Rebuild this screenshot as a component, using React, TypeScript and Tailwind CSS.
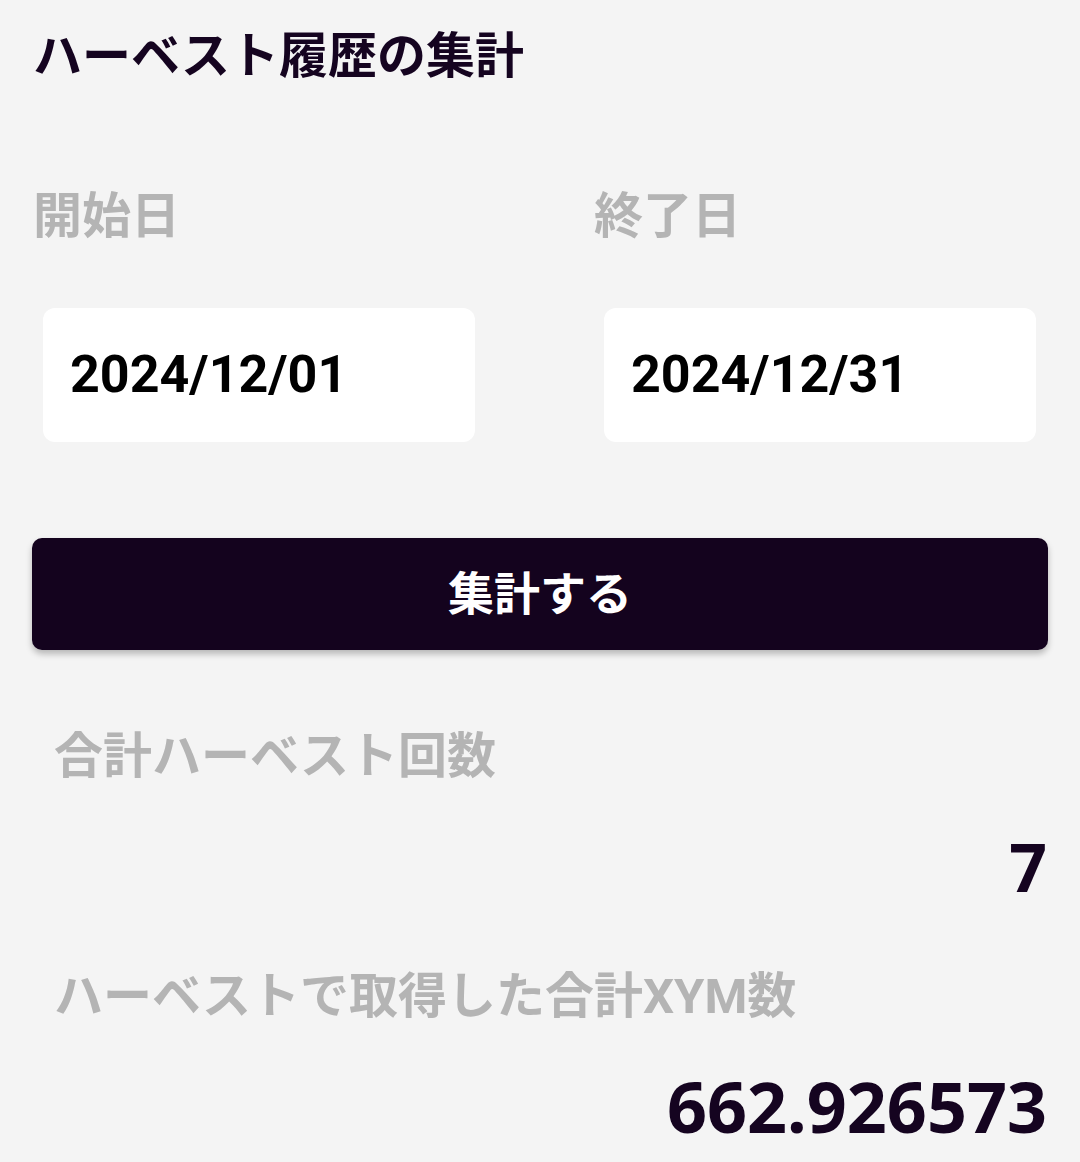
const fontStack = { fontFamily: "Roboto, 'Noto Sans CJK JP', sans-serif" };

function DateField({ label, value }: { label: string; value: string }) {
  return (
    <div className="w-[449px] flex flex-col">
      <div className="text-[49px] leading-[58px] font-bold text-[#b4b4b4]">{label}</div>
      <div className="mt-[62px] ml-[10px] w-[432px] h-[134px] rounded-[12px] bg-white flex items-center pl-[27px]">
        <span className="text-[52px] font-bold text-black leading-none">{value}</span>
      </div>
    </div>
  );
}

function ResultRow({ label, value, size }: { label: string; value: string; size: string }) {
  return (
    <div className="flex flex-col">
      <div className="pl-[21px] text-[49px] leading-[58px] font-bold text-[#b4b4b4]">{label}</div>
      <div
        className={`mt-[40px] text-right leading-[80px] font-bold text-[#150420] ${size}`}
        style={{ fontFamily: "'Noto Sans', sans-serif" }}
      >
        {value}
      </div>
    </div>
  );
}

export default function App() {
  return (
    <main className="min-h-[1162px] bg-[#f4f4f4] px-[33px] pt-[28px]" style={fontStack}>
      <h1 className="text-[49px] leading-[58px] font-semibold text-[#150420]">ハーベスト履歴の集計</h1>

      {/* Date range */}
      <div className="mt-[102px] flex gap-[112px]">
        <DateField label="開始日" value="2024/12/01" />
        <DateField label="終了日" value="2024/12/31" />
      </div>

      <button className="mt-[96px] -mx-[1px] w-[1016px] h-[112px] rounded-[10px] bg-[#14031e] text-white text-[46px] font-bold shadow-[0_4px_6px_rgba(0,0,0,0.25)]">
        集計する
      </button>

      {/* Results */}
      <div className="mt-[78px] flex flex-col gap-[62px]">
        <ResultRow label="合計ハーベスト回数" value="7" size="text-[66px]" />
        <ResultRow label="ハーベストで取得した合計XYM数" value="662.926573" size="text-[70px]" />
      </div>
    </main>
  );
}
